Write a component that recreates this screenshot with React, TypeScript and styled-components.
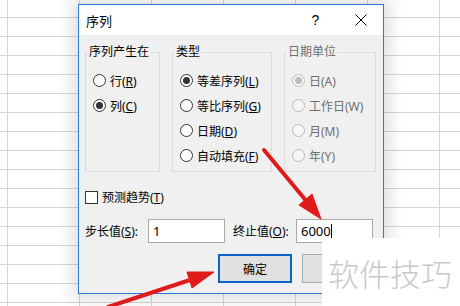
import React from "react";
import styled, { createGlobalStyle } from "styled-components";

const Global = createGlobalStyle`
  html, body { margin: 0; padding: 0; background: #fff; }
  body { font-family: "Noto Sans", "Noto Sans CJK SC", sans-serif; }
  * { box-sizing: border-box; }
`;

const Sheet = styled.div`
  position: relative;
  width: 460px;
  height: 306px;
  overflow: hidden;
  background-color: #fff;
  background-image:
    linear-gradient(to right, #d6d6d6 1px, transparent 1px),
    linear-gradient(to bottom, #d6d6d6 1px, transparent 1px);
  background-size: 72px 19px;
  background-position: 7px 17px;
`;

const Dialog = styled.div`
  position: absolute;
  left: 78px;
  top: 4px;
  width: 306px;
  height: 290px;
  border: 1px solid #2b7ad6;
  background: #f0f0f0;
  box-shadow: 0 0 16px 5px rgba(0, 0, 0, 0.14);
  display: flex;
  flex-direction: column;
  font-size: 12px;
  color: #000;
`;

const TitleBar = styled.div`
  height: 30px;
  background: #fff;
  display: flex;
  align-items: center;
  padding-left: 7px;
`;

const Title = styled.span`
  flex: 1;
  font-size: 13px;
`;

const TitleButton = styled.div`
  width: 45px;
  height: 30px;
  display: flex;
  align-items: center;
  justify-content: center;
  font-size: 14px;
  font-family: "Liberation Sans", sans-serif;
`;

const Body = styled.div`
  padding: 9px 7px 0 6px;
  display: flex;
  flex-direction: column;
`;

const Groups = styled.div`
  display: flex;
  gap: 12px;
`;

const Group = styled.fieldset<{ $w: number; $disabled?: boolean }>`
  margin: 0;
  min-width: 0;
  width: ${(p) => p.$w}px;
  height: 128px;
  border: 1px solid #dcdcdc;
  padding: 8px 0 0 7px;
  color: ${(p) => (p.$disabled ? "#6f6f6f" : "#000")};
  display: flex;
  flex-direction: column;
`;

const Legend = styled.legend`
  padding: 0 2px;
  margin-left: -6px;
  font-size: 12px;
  line-height: 16px;
`;

const Option = styled.div`
  height: 25px;
  display: flex;
  align-items: center;
  gap: 4px;
  white-space: nowrap;
`;

const Label = styled.span`
  white-space: nowrap;
`;

const Radio = styled.span<{ $checked?: boolean; $disabled?: boolean }>`
  width: 13px;
  height: 13px;
  border-radius: 50%;
  border: 1px solid ${(p) => (p.$disabled ? "#bcbcbc" : "#333")};
  background: ${(p) => (p.$disabled ? "#f6f6f6" : "#fff")};
  display: flex;
  align-items: center;
  justify-content: center;
  flex: none;
  &::after {
    content: "";
    width: 7px;
    height: 7px;
    border-radius: 50%;
    background: ${(p) => (p.$disabled ? "#bcbcbc" : "#333")};
    display: ${(p) => (p.$checked ? "block" : "none")};
  }
`;

const CheckRow = styled.div`
  margin-top: 17px;
  height: 16px;
  display: flex;
  align-items: center;
  gap: 4px;
`;

const Checkbox = styled.span`
  width: 13px;
  height: 13px;
  border: 1px solid #333;
  background: #fff;
  flex: none;
`;

const FieldRow = styled.div`
  margin-top: 14px;
  display: flex;
  align-items: center;
`;

const FieldLabel = styled.span<{ $ml?: number }>`
  margin-left: ${(p) => p.$ml ?? 0}px;
  width: 63px;
  white-space: nowrap;
`;

const Input = styled.div`
  width: 77px;
  height: 24px;
  border: 1px solid #a9a9a9;
  background: #fff;
  display: flex;
  align-items: center;
  padding-left: 4px;
  font-size: 13px;
`;

const Caret = styled.span`
  width: 1px;
  height: 15px;
  background: #000;
`;

const ButtonRow = styled.div`
  margin-top: 11px;
  display: flex;
  justify-content: flex-end;
  gap: 10px;
`;

const Button = styled.div<{ $default?: boolean }>`
  width: 74px;
  height: 29px;
  background: #e1e1e1;
  border: ${(p) => (p.$default ? "2px solid #0a64c8" : "1px solid #adadad")};
  display: flex;
  align-items: center;
  justify-content: center;
  font-size: 12px;
`;

const Watermark = styled.div`
  position: absolute;
  left: 322px;
  top: 238px;
  right: 0;
  bottom: 0;
  background: #fff;
  color: #c9c9c9;
  font-size: 31px;
  font-family: "Noto Sans CJK SC", sans-serif;
  display: flex;
  align-items: center;
  padding-left: 6px;
  font-weight: 300;
`;

const Overlay = styled.svg`
  position: absolute;
  left: 0;
  top: 0;
  pointer-events: none;
`;

export default function App() {
  return (
    <Sheet>
      <Global />
      <Dialog>
        <TitleBar>
          <Title>序列</Title>
          <TitleButton>?</TitleButton>
          <TitleButton>
            <svg width="12" height="12" viewBox="0 0 12 12">
              <path d="M0.5 0.5 L11.5 11.5 M11.5 0.5 L0.5 11.5" stroke="#000" strokeWidth="1" />
            </svg>
          </TitleButton>
        </TitleBar>
        <Body>
          <Groups>
            <Group $w={75}>
              <Legend>序列产生在</Legend>
              <Option>
                <Radio />
                <Label>行(<u>R</u>)</Label>
              </Option>
              <Option>
                <Radio $checked />
                <Label>列(<u>C</u>)</Label>
              </Option>
            </Group>
            <Group $w={100}>
              <Legend>类型</Legend>
              <Option>
                <Radio $checked />
                <Label>等差序列(<u>L</u>)</Label>
              </Option>
              <Option>
                <Radio />
                <Label>等比序列(<u>G</u>)</Label>
              </Option>
              <Option>
                <Radio />
                <Label>日期(<u>D</u>)</Label>
              </Option>
              <Option>
                <Radio />
                <Label>自动填充(<u>F</u>)</Label>
              </Option>
            </Group>
            <Group $w={92} $disabled>
              <Legend>日期单位</Legend>
              <Option>
                <Radio $checked $disabled />
                <Label>日(A)</Label>
              </Option>
              <Option>
                <Radio $disabled />
                <Label>工作日(W)</Label>
              </Option>
              <Option>
                <Radio $disabled />
                <Label>月(M)</Label>
              </Option>
              <Option>
                <Radio $disabled />
                <Label>年(Y)</Label>
              </Option>
            </Group>
          </Groups>
          <CheckRow>
            <Checkbox />
            <Label>预测趋势(<u>T</u>)</Label>
          </CheckRow>
          <FieldRow>
            <FieldLabel>
              步长值(<u>S</u>):
            </FieldLabel>
            <Input>1</Input>
            <FieldLabel $ml={8}>
              终止值(<u>O</u>):
            </FieldLabel>
            <Input>
              6000
              <Caret />
            </Input>
          </FieldRow>
          <ButtonRow>
            <Button $default>确定</Button>
            <Button />
          </ButtonRow>
        </Body>
      </Dialog>
      <Watermark>软件技巧</Watermark>
      <Overlay width="460" height="306" viewBox="0 0 460 306">
        <g fill="#e01b1b" stroke="#e01b1b">
          <line x1="264" y1="150" x2="308" y2="203" strokeWidth="4" strokeLinecap="round" />
          <polygon points="321,219 312,194 299,205" strokeWidth="1" />
          <line x1="108" y1="307" x2="193" y2="279" strokeWidth="4" strokeLinecap="round" />
          <polygon points="214,272 192,288 187,272" strokeWidth="1" />
        </g>
      </Overlay>
    </Sheet>
  );
}
